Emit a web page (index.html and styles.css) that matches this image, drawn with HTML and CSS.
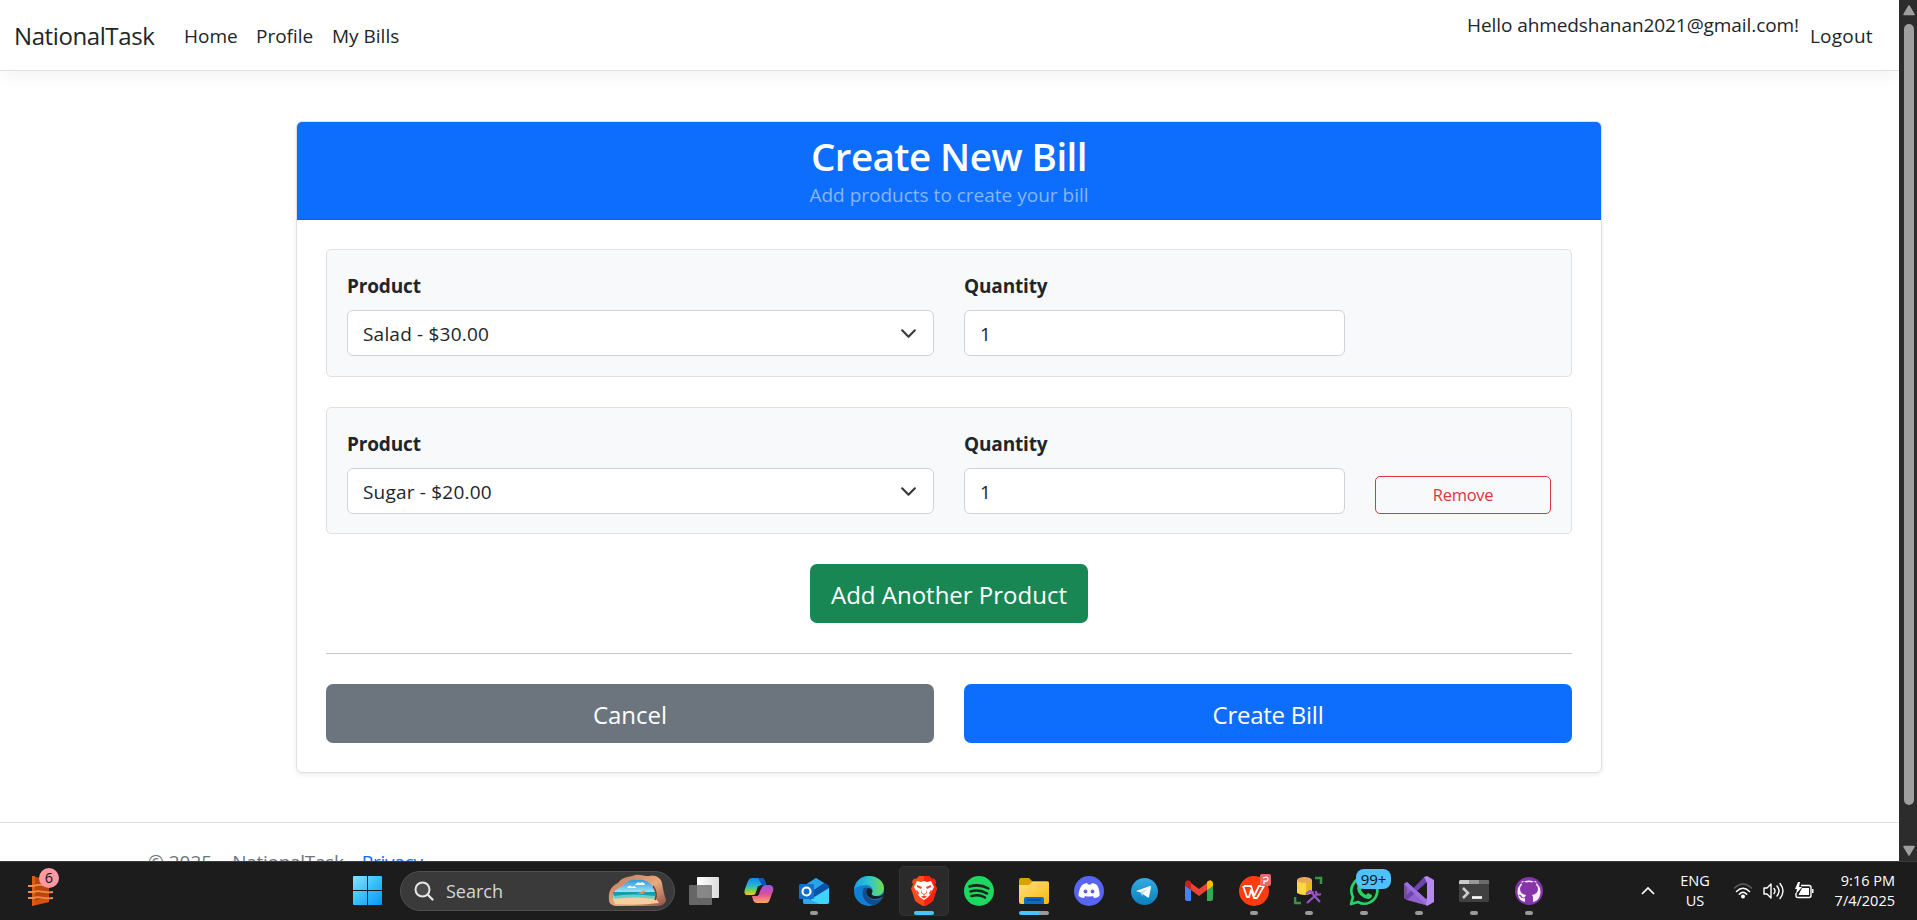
FILE: index.html
```html
<!DOCTYPE html>
<html lang="en">
<head>
<meta charset="utf-8">
<title>Create New Bill - NationalTask</title>
<link rel="stylesheet" href="styles.css">
</head>
<body>
<div class="viewport">
  <div class="page">
    <header class="navbar">
      <a class="brand">NationalTask</a>
      <nav class="links"><a class="l-home">Home</a><a class="l-profile">Profile</a><a class="l-bills">My Bills</a></nav>
      <div class="account"><span class="hello">Hello ahmedshanan2021@gmail.com!</span><a class="logout">Logout</a></div>
    </header>
    <main class="card">
      <div class="card-header">
        <h2>Create New Bill</h2>
        <p>Add products to create your bill</p>
      </div>
      <div class="card-body">
        <section class="item">
          <div class="field"><label>Product</label><div class="control select"><span class="v-salad">Salad - $30.00</span><svg width="20" height="20" viewBox="0 0 16 16"><path d="m2 5 6 6 6-6" fill="none" stroke="#343a40" stroke-width="2" stroke-linecap="round" stroke-linejoin="round"/></svg></div></div>
          <div class="field"><label class="l-qty">Quantity</label><div class="control"><span>1</span></div></div>
        </section>
        <section class="item second">
          <div class="field"><label>Product</label><div class="control select"><span class="v-sugar">Sugar - $20.00</span><svg width="20" height="20" viewBox="0 0 16 16"><path d="m2 5 6 6 6-6" fill="none" stroke="#343a40" stroke-width="2" stroke-linecap="round" stroke-linejoin="round"/></svg></div></div>
          <div class="field"><label class="l-qty">Quantity</label><div class="control"><span>1</span></div></div>
          <button class="remove">Remove</button>
        </section>
        <button class="btn add">Add Another Product</button>
        <hr>
        <div class="actions"><button class="btn cancel">Cancel</button><button class="btn create">Create Bill</button></div>
      </div>
    </main>
    <footer class="footer"><span class="copy">© 2025</span><span>-</span><span class="site">NationalTask</span><span>-</span><a>Privacy</a></footer>
  </div>
  <div class="scrollbar">
    <svg width="12" height="11" viewBox="0 0 12 11"><path d="M6 1 11 9.500H1Z" fill="#9f9f9f" stroke="#9f9f9f" stroke-width="1.500" stroke-linejoin="round"/></svg>
    <div class="thumb"></div>
    <svg width="12" height="11" viewBox="0 0 12 11"><path d="M6 10 11 1.500H1Z" fill="#9f9f9f" stroke="#9f9f9f" stroke-width="1.500" stroke-linejoin="round"/></svg>
  </div>
</div>
<div class="taskbar">
  <div class="widget">
    <svg width="26" height="32" viewBox="0 0 26 32"><path d="M4 1 21 5V27L4 31Z" fill="#b8460a"/><path d="M4 1h3v29l-3 1Z" fill="#dd5c12"/><path d="M7 26 21 21v6L7 30Z" fill="#d4540f"/><path d="M0 11h6c5-3 10 1 15-1M0 17h6c5-3 10 2 19 0M0 23h6c5-3 10 2 19 0" fill="none" stroke="#f08a4b" stroke-width="1.800"/></svg>
    <span class="badge six">6</span>
  </div>
  <svg class="start" width="30" height="30" viewBox="0 0 30 30"><defs><linearGradient id="win" x1="0" y1="0" x2="1" y2="1"><stop offset="0" stop-color="#8be2ff"/><stop offset=".5" stop-color="#38c0fa"/><stop offset="1" stop-color="#0696f8"/></linearGradient></defs><path d="M0 1q0-1 1-1h13v14H0ZM15 0h13q1 0 1 1v13H15ZM0 15h14v14H1q-1 0-1-1ZM15 15h14v13q0 1-1 1H15Z" fill="url(#win)"/></svg>
  <div class="search">
    <svg width="20" height="20" viewBox="0 0 20 20"><circle cx="8.500" cy="8.500" r="7" fill="#4b4b4b" stroke="#e6e6e6" stroke-width="2"/><path d="m13.800 13.800 4.700 4.700" stroke="#e6e6e6" stroke-width="2.300" stroke-linecap="round"/></svg>
    <span>Search</span>
    <svg class="cave" width="58" height="34" viewBox="0 0 58 34">
      <defs><linearGradient id="rock" x1="0" y1="0" x2="1" y2="1"><stop offset="0" stop-color="#bd735b"/><stop offset=".55" stop-color="#e9aa7c"/><stop offset="1" stop-color="#8f5048"/></linearGradient><linearGradient id="sky" x1="0" y1="0" x2="0" y2="1"><stop offset="0" stop-color="#299bdd"/><stop offset=".6" stop-color="#a9e3f5"/></linearGradient></defs>
      <path d="M1 26C0 18 3 12 10 9 13 4 19 3 24 2 30-1 35 2 41 2 47 0 53 4 54 9 55 15 56 20 58 26 57 31 53 32 47 32H10C5 32 1 30 1 26Z" fill="url(#rock)"/>
      <path d="M5 24C4 17 10 14 15 12 18 7 24 5 29 6 36 5 41 8 45 12 49 15 49 21 46 27H8Z" fill="url(#sky)"/>
      <path d="M19 14q2-4 5-1 3-2 4 1ZM27 11q3-4 5-2 4-2 5 2Z" fill="#fff"/>
      <path d="M5 18H48L46 24H6Z" fill="#159dae"/><path d="M5 22q20-3 42 0l-2 4H8Z" fill="#63d2c6"/>
      <path d="M5 25q21-3 43 0l3 4q-22 3-44 1Z" fill="#f5cf9c"/><path d="m29 20 8-4-1 4Z" fill="#f38a2f"/>
      <path d="M45 12q5 7 2 14" fill="none" stroke="#783d39" stroke-width="1.500"/>
    </svg>
  </div>
  <div class="apps">
    <div class="app"><svg width="30" height="30" viewBox="0 0 30 30"><defs><linearGradient id="tv"><stop stop-color="#fff"/><stop offset="1" stop-color="#ddd"/></linearGradient></defs><rect x="8" y="1" width="22" height="21" rx="1" fill="url(#tv)"/><rect x="0" y="9" width="23" height="20" rx="1" fill="#737373" opacity=".85"/></svg></div>
    <div class="app"><svg width="30" height="30" viewBox="0 0 30 30"><defs><linearGradient id="cpa" x1="0" y1="0" x2="0" y2="1"><stop stop-color="#1687ec"/><stop offset=".45" stop-color="#20b8d2"/><stop offset=".75" stop-color="#7dd13d"/><stop offset="1" stop-color="#ffc423"/></linearGradient><linearGradient id="cpb" x1="0" y1="0" x2="0" y2="1"><stop stop-color="#9155e7"/><stop offset=".5" stop-color="#e04e9b"/><stop offset="1" stop-color="#ffab5c"/></linearGradient></defs><path d="M8 2h9c4 0 4 4 5 7h-4c-3 0-3 2-4 5l-1 2c-1 2-2 3-5 3H4c-4 0-4-3-3-6l3-8c1-2 2-3 4-3Z" fill="url(#cpa)"/><path d="M22 27H13c-4 0-4-4-5-7h4c3 0 3-2 4-5l1-2c1-3 3-4 5-4h3c4 0 5 3 4 6l-3 8c-1 3-2 4-4 4Z" fill="url(#cpb)"/><path d="M14 10h4l-4 9h-3Z" fill="#1c1c1c"/><path d="M14 2h3c4 0 4 4 5 7h-4Z" fill="#1751bd"/></svg></div>
    <div class="app"><svg width="30" height="30" viewBox="0 0 30 30"><path d="M4 10 17 2 30 10v16q0 2-2 2H6q-2 0-2-2Z" fill="#0b60b5"/><path d="m5 10 12-8 8 5-13 9Z" fill="#28a5e9"/><path d="m12 16 14-9 4 3v3L14 24Z" fill="#0754a7"/><path d="m30 12-18 11v5h16q2 0 2-2Z" fill="#42d3fa"/><path d="m4 20 16 8H6q-2 0-2-2Z" fill="#31a8ed"/><rect x="0" y="8" width="15" height="15" rx="1.500" fill="#116fd0"/><circle cx="7.500" cy="15.500" r="4" fill="none" stroke="#fff" stroke-width="2.200"/></svg><i class="dot"></i></div>
    <div class="app"><svg width="30" height="30" viewBox="0 0 30 30"><defs><linearGradient id="edg"><stop stop-color="#1aa2e7"/><stop offset=".5" stop-color="#2dc5cf"/><stop offset="1" stop-color="#75db4c"/></linearGradient></defs><circle cx="15" cy="15" r="15" fill="#1180d4"/><path d="M0 14C1 5 7 0 15 0c9 0 15 6 15 12 0 5-4 8-8 8-4 0-5-2-4-3 2-4-1-8-6-8C6 9 1 12 0 14Z" fill="url(#edg)"/><path d="M10 12c-4 8 2 16 9 17 5-1 8-4 9-7-7 4-15 1-16-5q-.500-3 2-5-2-1-4 0Z" fill="#124d91"/><path d="M14 12q-3 3-1 7 4 6 13 3 3-1 4-3V17q-3 4-8 3c-4 0-5-2-4-3 1-2 0-5-4-5Z" fill="#1c1c1c"/></svg></div>
    <div class="app active"><svg width="26" height="30" viewBox="0 0 26 30"><path d="M8 0h10l3 3 2-.500 2 3-1 3 2 4-4 12q-1 2-9 6-8-4-9-6L0 12.500l2-4-1-3 2-3L5 3Z" fill="#fb4a1d"/><path d="M13 0h5l3 3 2-.500 2 3-1 3 2 4-4 12q-1 2-9 6Z" fill="#ff2210"/><path d="M6 5 10 6 13 5l3 1 4-1 3 6-3 6-1 2-3 3-3 2-3-2-3-3-1-2-3-6Z" fill="#fff"/><path d="m6 9 5 2-1 2-4-2ZM20 9l-5 2 1 2 4-2ZM10 14v3l3 2 3-2v-3l-1 3-2 1-2-1ZM10 20.500l3-1 3 1-3 2ZM6 14l2 3-1 2-2-4ZM20 14l-2 3 1 2 2-4Z" fill="#f4421c"/></svg><i class="dot on"></i></div>
    <div class="app"><svg width="30" height="30" viewBox="0 0 30 30"><circle cx="15" cy="15" r="15" fill="#1ed760"/><path d="M5.500 10.500q10-3 19 2M6.500 15.500q9-2.500 16.500 2M7.500 20q8-2 13.500 1.500" fill="none" stroke="#17251b" stroke-width="2.500" stroke-linecap="round"/></svg></div>
    <div class="app"><svg width="30" height="30" viewBox="0 0 30 30"><defs><linearGradient id="fld" x1="0" y1="0" x2="1" y2="1"><stop stop-color="#ffe07b"/><stop offset="1" stop-color="#f9b911"/></linearGradient></defs><path d="M0 4q0-2 2-2h8l3 3H28q2 0 2 2v8H0Z" fill="#dea000"/><path d="M0 9h10l3-3h15q2 0 2 1v19q0 2-2 2H2q-2 0-2-2Z" fill="url(#fld)"/><path d="M5 28v-5q0-2 2-2h16q2 0 2 2v5Z" fill="#086cc8"/><path d="M8 24h14" stroke="#064380" stroke-width="1.300"/></svg><i class="dot split"></i></div>
    <div class="app"><svg width="30" height="30" viewBox="0 0 30 30"><circle cx="15" cy="15" r="15" fill="#5865f2"/><path d="M8 9q2-1.500 5-2l1 1.500h3L18 7q3 .500 5 2 3 5 2.500 11-2.500 2-5.500 2l-1-2q-4 1-8 0l-1 2q-3 0-5.500-2Q4.500 14 8 9Z" fill="#fff"/><ellipse cx="11.500" cy="15.500" rx="1.900" ry="2.100" fill="#5865f2"/><ellipse cx="18.500" cy="15.500" rx="1.900" ry="2.100" fill="#5865f2"/></svg></div>
    <div class="app"><svg width="27" height="27" viewBox="0 0 27 27"><defs><linearGradient id="tg" x1="0" y1="0" x2="0" y2="1"><stop stop-color="#35aae2"/><stop offset="1" stop-color="#0b7fbf"/></linearGradient></defs><circle cx="13.500" cy="13.500" r="13.500" fill="url(#tg)"/><path d="m5 13 14-5q1 0 1 1l-2 10q-.500 1-1.500.300l-7-4.800Z" fill="#fff"/><path d="m9.500 14.500 8-5-6 6v3Z" fill="#b9dcee"/></svg></div>
    <div class="app"><svg width="28" height="22" viewBox="0 0 28 22"><path d="M0 4h6v17H2q-2 0-2-2Z" fill="#4285f4"/><path d="M22 4h6v15q0 2-2 2h-4Z" fill="#34a853"/><path d="m0 4 6-1 8 6 8-6v7l-8 6-8-6Z" fill="#ea4335"/><path d="M0 3q1-4 5-2l1 1v8L0 6Z" fill="#c5221f"/><path d="M28 3q-1-4-5-2l-1 1v8l6-4Z" fill="#fbbc04"/></svg></div>
    <div class="app"><svg width="34" height="34" viewBox="0 0 34 34"><circle cx="17" cy="17" r="15" fill="#ff3c0b"/><path d="M7 12h7l3 10 5-10h5L20 24h-3l-3-8-2 7h-2L6 12" fill="none" stroke="#fff" stroke-width="1.800" stroke-linejoin="round"/><rect x="23" y="0" width="11" height="12" rx="2" fill="#e96868"/><path d="M26 4q5-2 5 1t-4 2v3" fill="none" stroke="#fff" stroke-width="1.300"/></svg><i class="dot"></i></div>
    <div class="app"><svg width="30" height="30" viewBox="0 0 30 30"><path d="M3 4v13q7 4 15 0V4Z" fill="#fbd64a"/><path d="M12 5h6v12l-6 2Z" fill="#e7b91c"/><ellipse cx="10.500" cy="4" rx="7.500" ry="3" fill="#eba85a"/><path d="M21 2h6v6M1 21v6h6" fill="none" stroke="#3a9445" stroke-width="2.600"/><path d="m12 18 4-3 4 2M16 15l10 11M13 27l10-9M22 15q0 5 5 3" fill="none" stroke="#9a52ca" stroke-width="2.200"/></svg><i class="dot"></i></div>
    <div class="app"><svg width="30" height="30" viewBox="0 0 30 30"><path d="M2 28 4 21A13 13 0 1 1 9 26Z" fill="#1c1c1c" stroke="#25d366" stroke-width="2.700" stroke-linejoin="round"/><path d="M9 9q2-2 3 0l1 3-1 2q2 4 5 5l2-2 4 2q0 4-4 4Q9 21 8 12Z" fill="#25d366"/></svg><span class="badge many">99+</span><i class="dot"></i></div>
    <div class="app"><svg width="30" height="30" viewBox="0 0 30 30"><path d="m0 8 3-2 20 18-2 5L3 24Z" fill="#8f62cc"/><path d="M0 8 3 6v18L0 22Z" fill="#76509f"/><path d="m0 22 20-21 3 5L3 24Z" fill="#6c44ac"/><path d="M20 1 23 0l7 4v22l-7 4-3-3 3-5V7Z" fill="#b58bf1"/><path d="m0 8 3-2 20 18-1 5Z" fill="#9c70dc"/></svg><i class="dot"></i></div>
    <div class="app"><svg width="30" height="22" viewBox="0 0 30 22"><rect width="30" height="22" rx="1.500" fill="#414141"/><path d="M0 4V1.500Q0 0 1.500 0H10v4Z" fill="#ccc"/><path d="M10 0h10v4H10Z" fill="#999"/><path d="M20 0h9q1 0 1 1v3H20Z" fill="#6b6b6b"/><path d="m4 8 5 5-5 5" fill="none" stroke="#ccc" stroke-width="2.600"/><path d="M13 17.500h10" stroke="#fff" stroke-width="2.600"/></svg><i class="dot"></i></div>
    <div class="app"><svg width="28" height="28" viewBox="0 0 28 28"><circle cx="14" cy="14" r="14" fill="#8534aa"/><path d="M10 25v-4q-4 1-5-2l-2-1q3-1 4 2 1 1 3 0l1-2q-6-1-6-6 0-3 2-4-1-2 0-4 2 0 4 1.500 3-1 6 0Q19 4 21 4q1 2 0 4 2 1 2 4 0 5-6 6l1 2v5l3-1A11.500 11.500 0 1 0 7 24Z" fill="#f6edf9"/></svg><i class="dot"></i></div>
  </div>
  <svg class="chev" width="16" height="10" viewBox="0 0 16 10"><path d="m2 8 6-6 6 6" fill="none" stroke="#fff" stroke-width="1.700"/></svg>
  <div class="lang"><span>ENG</span><span>US</span></div>
  <div class="status">
    <svg width="20" height="18" viewBox="0 0 20 18"><path d="M1 6.500q9-9 18 0" fill="none" stroke="#606060" stroke-width="1.500"/><path d="M3.500 9.500q6.500-6.500 13 0M6.300 12.300q3.700-4 7.400 0" fill="none" stroke="#fff" stroke-width="1.500" stroke-linecap="round"/><circle cx="10" cy="14.500" r="2" fill="#fff"/></svg>
    <svg width="21" height="18" viewBox="0 0 21 18"><path d="M1 6h3l4-4v14l-4-4H1Z" fill="none" stroke="#fff" stroke-width="1.400" stroke-linejoin="round"/><path d="M11 6.500q2 2.500 0 5M14 4q4 5 0 10M17 1.500q6 7.500 0 15" fill="none" stroke="#fff" stroke-width="1.400" stroke-linecap="round"/></svg>
    <svg width="20" height="18" viewBox="0 0 20 18"><path d="M7 3.500h8q2 0 2 2v8q0 2-2 2H4q-2 0-2-2V11" fill="none" stroke="#fff" stroke-width="1.400"/><path d="M8 6h7v7H4.500Z" fill="#fff"/><path d="M18 7h1.500v4H18ZM4 0 1 7h2l-1 5 6-7H5l1-5Z" fill="#fff"/></svg>
  </div>
  <div class="clock"><span>9:16 PM</span><span>7/4/2025</span></div>
</div>
</body>
</html>
```

FILE: styles.css
```css
* { box-sizing: border-box; }
body { margin: 0; width: 1917px; height: 920px; overflow: hidden; display: flex; flex-direction: column; background: #fff; color: #212529; font: 19px/30px "Open Sans", "Noto Sans", sans-serif; }
.viewport { height: 861px; display: flex; overflow: hidden; }
.page { width: 1899px; display: flex; flex-direction: column; flex: none; }
.navbar { height: 71px; flex: none; display: flex; align-items: flex-start; padding: 21px 25px 0 14px; border-bottom: 1px solid #dee2e6; box-shadow: 0 5px 16px rgba(0,0,0,.05); white-space: nowrap; }
.brand { width: 170px; font-size: 24px; letter-spacing: -.4px; }
.links { display: flex; }
.l-home { width: 72px; }
.l-profile { width: 76px; }
.account { margin-left: auto; display: flex; }
.hello { width: 343px; margin-top: -11px; letter-spacing: -.08px; }
.logout { width: 64px; letter-spacing: .2px; }
.card { width: 1306px; height: 652px; margin: 50px 0 0 296px; border: 1px solid #dedfe0; border-radius: 6px; box-shadow: 0 2px 5px rgba(0,0,0,.075); flex: none; display: flex; flex-direction: column; }
.card-header { height: 98px; flex: none; background: #0d6efd; border-bottom: 1px solid #0c63e4; border-radius: 5px 5px 0 0; text-align: center; color: #fff; padding-top: 10px; }
h2 { margin: 0; font-size: 38.500px; line-height: 48px; font-weight: 600; letter-spacing: -.55px; }
.card-header p { margin: 0; line-height: 30px; color: #86b7fe; }
.card-body { padding: 29px 29px 0; display: flex; flex-direction: column; }
.item { height: 128px; background: #f8f9fa; border: 1px solid #dee2e6; border-radius: 5px; padding: 20px; display: grid; grid-template-columns: 587px 381px 176px; column-gap: 30px; margin-bottom: 30px; }
.item.second { height: 127px; padding-bottom: 19px; }
label { display: block; font-weight: 700; line-height: 30px; padding-top: 1px; margin-bottom: 9px; letter-spacing: -.15px; }
.control { height: 46px; border: 1px solid #ced4da; border-radius: 6px; background: #fff; padding: 0 16px 0 15px; display: flex; align-items: center; justify-content: space-between; line-height: 44px; }
.control span { padding-top: 1px; }
.v-salad, .v-sugar { letter-spacing: .2px; }
.control svg { width: 17px; height: 17px; }
button { font-family: inherit; border: 0; padding: 0; }
.remove { align-self: end; height: 38px; border: 1px solid #dc3545; border-radius: 5px; background: transparent; color: #dc3545; font-size: 16.500px; letter-spacing: -.3px; padding-bottom: 2px; }
.btn { height: 59px; border-radius: 7px; color: #fff; font-size: 24px; line-height: 57px; padding-top: 2px; }
.add { width: 278px; align-self: center; background: #198754; }
hr { width: 100%; margin: 30px 0; border: 0; border-top: 1px solid #c7c8ca; }
.actions { display: grid; grid-template-columns: 608px 608px; column-gap: 30px; }
.cancel { background: #6c757d; }
.create { background: #0d6efd; letter-spacing: -.25px; }
.footer { flex: none; margin-top: 49px; border-top: 1px solid #dee2e6; height: 76px; padding: 24px 0 0 148px; display: flex; gap: 6px; color: #6c757d; white-space: nowrap; }
.copy { margin-right: 2px; }
.site { letter-spacing: -.3px; }
.footer a { color: #0d6efd; letter-spacing: -.25px; }
.scrollbar { width: 18px; background: #2c2c2c; display: flex; flex-direction: column; align-items: center; padding: 5px 0 5px 2px; }
.thumb { width: 10px; height: 781px; border-radius: 5px; background: #9f9f9f; margin: 8px 0 auto; }
.taskbar { height: 59px; background: #1c1c1c; border-top: 1px solid #3c3c3c; display: flex; align-items: center; padding: 0 22px 0 28px; color: #fff; font-size: 14.500px; line-height: 20px; flex: none; }
.widget { position: relative; width: 325px; height: 32px; }
.badge { position: absolute; color: #111; text-align: center; }
.six { left: 11px; top: -7px; width: 20px; height: 20px; border-radius: 10px; background: #ff99a4; }
.start { flex: none; }
.search { width: 275px; height: 40px; flex: none; margin: 0 2px 0 17px; border: 1px solid #505050; border-radius: 20px; background: #3a3a3a; display: flex; align-items: center; padding: 0 8px 0 13px; font-size: 18px; color: #d6d6d6; }
.search span { margin-left: 12px; }
.cave { margin-left: auto; }
.apps { display: flex; flex: none; }
.app { position: relative; width: 50px; height: 50px; margin-right: 5px; border-radius: 5px; display: flex; align-items: center; justify-content: center; }
.apps .app:first-child { margin-left: 2px; }
.active { background: #2a2a2a; border: 1px solid #333; }
.dot { position: absolute; bottom: 1px; width: 8px; height: 4px; border-radius: 2px; background: #9a9a9a; }
.dot.on { width: 20px; bottom: 0; background: #4cc2ff; }
.dot.split { width: 30px; background: linear-gradient(90deg, #4cc2ff 20px, #9a9a9a 20px); }
.many { left: 17px; top: 3px; width: 35px; height: 20px; border-radius: 8px; background: #4cc2ff; font-size: 15px; }
.chev { margin-left: 81px; }
.lang { width: 50px; margin-left: 14px; display: flex; flex-direction: column; align-items: center; }
.status { display: flex; gap: 10px; margin-left: 13px; }
.clock { margin-left: auto; display: flex; flex-direction: column; align-items: flex-end; }
```
